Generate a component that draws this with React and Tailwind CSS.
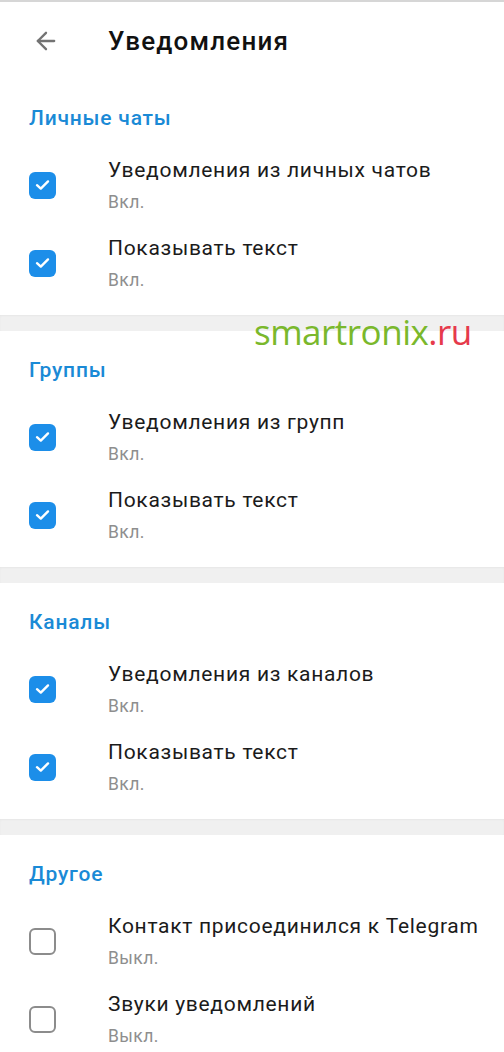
import { ArrowLeft } from "lucide-react";

const sections = [
  {
    title: "Личные чаты",
    items: [
      { label: "Уведомления из личных чатов", on: true },
      { label: "Показывать текст", on: true },
    ],
  },
  {
    title: "Группы",
    items: [
      { label: "Уведомления из групп", on: true },
      { label: "Показывать текст", on: true },
    ],
  },
  {
    title: "Каналы",
    items: [
      { label: "Уведомления из каналов", on: true },
      { label: "Показывать текст", on: true },
    ],
  },
  {
    title: "Другое",
    items: [
      { label: "Контакт присоединился к Telegram", on: false },
      { label: "Звуки уведомлений", on: false },
    ],
  },
];

const Checkbox = ({ on }) =>
  on ? (
    <div className="w-[27px] h-[27px] rounded-[6px] bg-[#1c8ee9] flex items-center justify-center">
      <svg width="15" height="12" viewBox="0 0 15 12" fill="none">
        <path
          d="M2 6.2 L5.8 9.6 L13 2.4"
          stroke="white"
          strokeWidth="2.4"
          strokeLinecap="round"
          strokeLinejoin="round"
        />
      </svg>
    </div>
  ) : (
    <div className="w-[27px] h-[27px] rounded-[6px] border-2 border-[#8c8c8c]" />
  );

const Row = ({ label, on }) => (
  <div className="h-[78px] flex items-center">
    <div className="w-[108px] pl-[29px] flex">
      <Checkbox on={on} />
    </div>
    <div className="flex flex-col">
      <span className="text-[21px] leading-[24px] tracking-[0.7px] text-[#1b1b1b]">{label}</span>
      <span className="mt-[10px] text-[17.5px] leading-[20px] tracking-[0.4px] text-[#8e8e8e]">
        {on ? "Вкл." : "Выкл."}
      </span>
    </div>
  </div>
);

export default function App() {
  return (
    <div
      className="relative w-[504px] h-[1052px] overflow-hidden bg-white"
      style={{ fontFamily: "Roboto, 'Noto Sans', sans-serif" }}
    >
      <div className="h-[79px] border-t-2 border-[#d6d6d6] flex items-center">
        <div className="w-[108px] pl-[32px] flex">
          <ArrowLeft size={28} strokeWidth={2} className="text-[#737373]" />
        </div>
        <span className="text-[26px] leading-[30px] font-medium tracking-[1.2px] text-[#111]">
          Уведомления
        </span>
      </div>

      {sections.map((s, i) => (
        <div key={i}>
          {i > 0 && <div className="h-[16px] bg-[#f0f0f0] shadow-[inset_0_1px_2px_rgba(0,0,0,0.04)]" />}
          <div className="pb-[13px]">
            <div className="h-[67px] pt-[28px] pl-[29px]">
              <div className="text-[21px] leading-[22px] font-medium tracking-[0.8px] text-[#1a8ad6]">
                {s.title}
              </div>
            </div>
            {s.items.map((it, j) => (
              <Row key={j} {...it} />
            ))}
          </div>
        </div>
      ))}

      <div
        className="absolute left-[254px] top-[312px] text-[35px] leading-[40px] tracking-[-0.5px] text-[#7ab82c]"
        style={{ fontFamily: "'Open Sans', sans-serif" }}
      >
        smartronix<span className="text-[#e63a4b]">.ru</span>
      </div>
    </div>
  );
}
